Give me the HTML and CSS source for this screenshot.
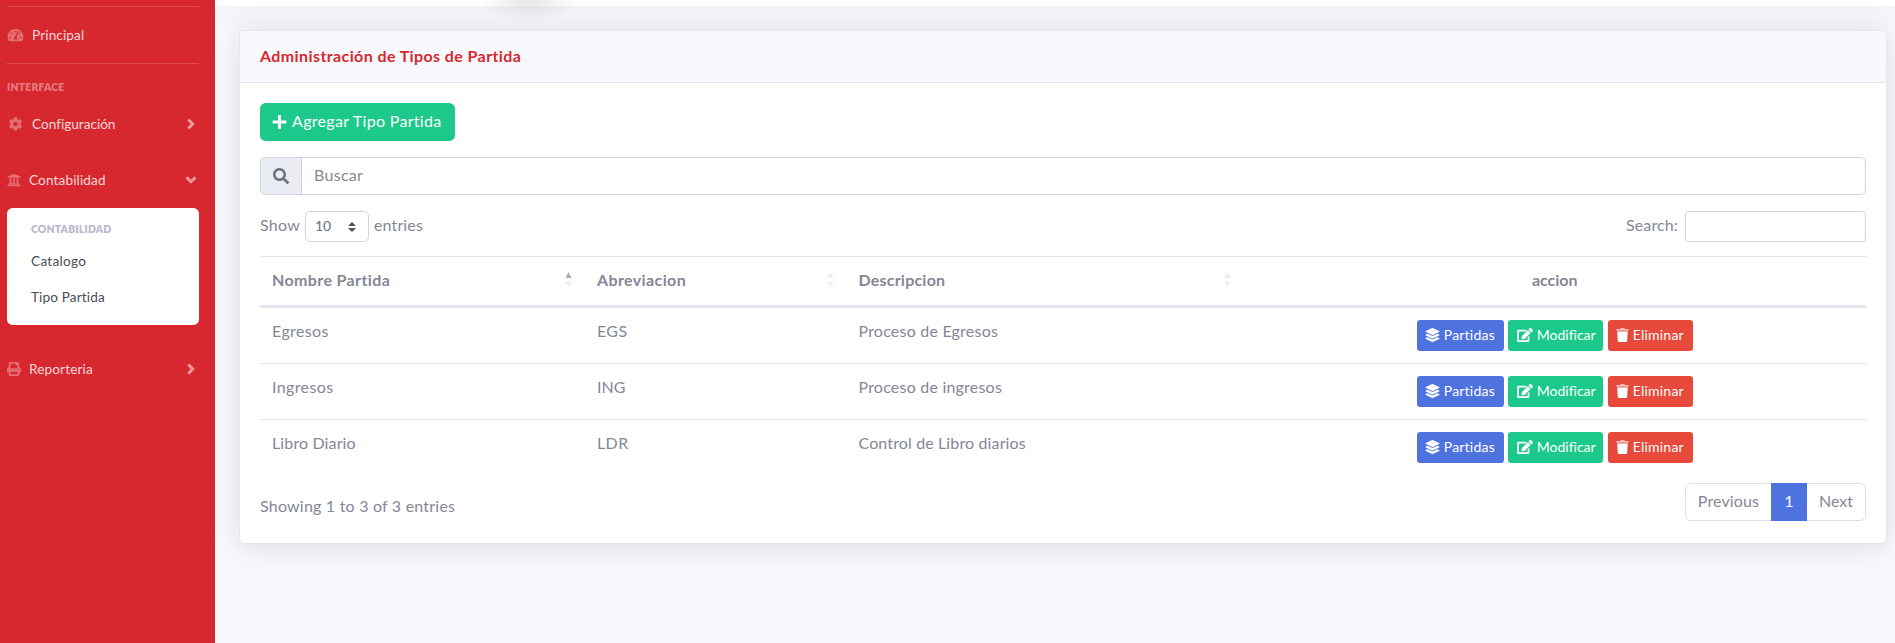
FILE: index.html
```html
<!DOCTYPE html>
<html lang="es">
<head>
<meta charset="utf-8">
<title>Tipos de Partida</title>
<link rel="stylesheet" href="styles.css">
</head>
<body>
<svg class="sprite" aria-hidden="true">
  <symbol id="gauge" viewBox="0 0 576 512"><path d="M288 32C128.94 32 0 160.94 0 320c0 52.8 14.25 102.26 39.06 144.8 5.61 9.62 16.3 15.2 27.44 15.2h443c11.14 0 21.83-5.58 27.44-15.2C561.75 422.26 576 372.8 576 320c0-159.06-128.94-288-288-288zm0 64c14.71 0 26.58 10.13 30.32 23.65-1.11 2.26-2.64 4.23-3.45 6.67l-9.22 27.67c-5.13 3.49-10.97 6.01-17.64 6.01-17.67 0-32-14.33-32-32S270.33 96 288 96zM96 384c-17.67 0-32-14.33-32-32s14.33-32 32-32 32 14.33 32 32-14.33 32-32 32zm48-160c-17.67 0-32-14.33-32-32s14.33-32 32-32 32 14.33 32 32-14.33 32-32 32zm246.77-72.41l-61.33 184C343.13 347.33 352 364.54 352 384c0 11.72-3.38 22.55-8.88 32H232.88c-5.5-9.45-8.88-20.28-8.88-32 0-33.94 26.5-61.43 59.9-63.59l61.34-184.01c4.17-12.56 17.73-19.45 30.36-15.17 12.57 4.19 19.35 17.79 15.17 30.36zm14.66 57.2l15.52-46.55c3.47-1.29 7.13-2.23 11.05-2.23 17.67 0 32 14.33 32 32s-14.33 32-32 32c-11.38-.01-20.89-6.28-26.57-15.22zM480 384c-17.67 0-32-14.33-32-32s14.33-32 32-32 32 14.33 32 32-14.33 32-32 32z"/></symbol>
  <symbol id="cog" viewBox="0 0 512 512"><path d="M487.4 315.7l-42.6-24.6c4.3-23.2 4.3-47 0-70.2l42.6-24.6c4.9-2.8 7.1-8.6 5.5-14-11.1-35.6-30-67.8-54.7-94.6-3.8-4.1-10-5.1-14.8-2.3L380.8 110c-17.9-15.4-38.5-27.3-60.8-35.1V25.8c0-5.6-3.9-10.5-9.4-11.7-36.7-8.2-74.3-7.8-109.2 0-5.5 1.2-9.4 6.1-9.4 11.7V75c-22.2 7.9-42.8 19.8-60.8 35.1L88.7 85.5c-4.9-2.8-11-1.9-14.8 2.3-24.7 26.7-43.6 58.9-54.7 94.6-1.7 5.4.6 11.2 5.5 14L67.3 221c-4.3 23.2-4.3 47 0 70.2l-42.6 24.6c-4.9 2.8-7.1 8.6-5.5 14 11.1 35.6 30 67.8 54.7 94.6 3.8 4.1 10 5.1 14.8 2.3l42.6-24.6c17.9 15.4 38.5 27.3 60.8 35.1v49.2c0 5.6 3.9 10.5 9.4 11.7 36.7 8.2 74.3 7.8 109.2 0 5.5-1.2 9.4-6.1 9.4-11.7v-49.2c22.2-7.9 42.8-19.8 60.8-35.1l42.6 24.6c4.9 2.8 11 1.9 14.8-2.3 24.7-26.7 43.6-58.9 54.7-94.6 1.5-5.5-.7-11.3-5.6-14.1zM256 336c-44.1 0-80-35.9-80-80s35.9-80 80-80 80 35.9 80 80-35.9 80-80 80z"/></symbol>
  <symbol id="bank" viewBox="0 0 512 512"><path d="M496 128v16a8 8 0 0 1-8 8h-24v12c0 6.627-5.373 12-12 12H60c-6.627 0-12-5.373-12-12v-12H24a8 8 0 0 1-8-8v-16a8 8 0 0 1 4.941-7.392l232-88a7.996 7.996 0 0 1 6.118 0l232 88A8 8 0 0 1 496 128zm-24 304H40c-13.255 0-24 10.745-24 24v16a8 8 0 0 0 8 8h464a8 8 0 0 0 8-8v-16c0-13.255-10.745-24-24-24zM96 192v192H60c-6.627 0-12 5.373-12 12v20h416v-20c0-6.627-5.373-12-12-12h-36V192h-64v192h-64V192h-64v192h-64V192H96z"/></symbol>
  <symbol id="print" viewBox="0 0 512 512"><path d="M448 192V77.25c0-8.49-3.37-16.62-9.37-22.63L393.37 9.37c-6-6-14.14-9.37-22.63-9.37H96C78.33 0 64 14.33 64 32v160c-35.35 0-64 28.65-64 64v112c0 8.84 7.16 16 16 16h48v96c0 17.67 14.33 32 32 32h320c17.67 0 32-14.33 32-32v-96h48c8.84 0 16-7.16 16-16V256c0-35.35-28.65-64-64-64zm-64 256H128v-96h256v96zm0-224H128V64h192v48c0 8.84 7.16 16 16 16h48v96zm48 72c-13.25 0-24-10.75-24-24 0-13.26 10.75-24 24-24s24 10.74 24 24c0 13.25-10.75 24-24 24z"/></symbol>
  <symbol id="angle-right" viewBox="0 0 256 512"><path d="M224.3 273l-136 136c-9.4 9.4-24.6 9.4-33.9 0l-22.6-22.6c-9.4-9.4-9.4-24.6 0-33.9l96.4-96.4-96.4-96.4c-9.4-9.4-9.4-24.6 0-33.9L54.3 103c9.4-9.4 24.6-9.4 33.9 0l136 136c9.5 9.4 9.5 24.6.1 34z"/></symbol>
  <symbol id="angle-down" viewBox="0 0 320 512"><path d="M143 352.3L7 216.3c-9.4-9.4-9.4-24.6 0-33.9l22.6-22.6c9.4-9.4 24.6-9.4 33.9 0l96.4 96.4 96.4-96.4c9.4-9.4 24.6-9.4 33.9 0l22.6 22.6c9.4 9.4 9.4 24.6 0 33.9l-136 136c-9.2 9.4-24.4 9.4-33.8 0z"/></symbol>
  <symbol id="plus" viewBox="0 0 448 512"><path d="M416 208H272V64c0-17.67-14.33-32-32-32h-32c-17.67 0-32 14.33-32 32v144H32c-17.67 0-32 14.33-32 32v32c0 17.67 14.33 32 32 32h144v144c0 17.67 14.33 32 32 32h32c17.67 0 32-14.33 32-32V304h144c17.67 0 32-14.33 32-32v-32c0-17.67-14.33-32-32-32z"/></symbol>
  <symbol id="search" viewBox="0 0 512 512"><path d="M505 442.7L405.3 343c-4.5-4.5-10.6-7-17-7H372c27.6-35.3 44-79.7 44-128C416 93.1 322.9 0 208 0S0 93.1 0 208s93.1 208 208 208c48.3 0 92.7-16.4 128-44v16.3c0 6.4 2.5 12.5 7 17l99.7 99.7c9.4 9.4 24.6 9.4 33.9 0l28.3-28.3c9.4-9.4 9.4-24.6.1-34zM208 336c-70.7 0-128-57.2-128-128 0-70.7 57.2-128 128-128 70.7 0 128 57.2 128 128 0 70.7-57.2 128-128 128z"/></symbol>
  <symbol id="layers" viewBox="0 0 512 512"><path d="M12.41 148.02l232.94 105.67c6.8 3.09 14.49 3.09 21.29 0l232.94-105.67c16.55-7.51 16.55-32.52 0-40.03L266.65 2.32a25.607 25.607 0 0 0-21.29 0L12.41 107.98c-16.55 7.51-16.55 32.53 0 40.04zm487.18 88.28l-58.09-26.33-161.64 73.27c-7.56 3.43-15.59 5.17-23.86 5.17s-16.29-1.74-23.86-5.17L70.51 209.97l-58.1 26.33c-16.55 7.5-16.55 32.5 0 40l232.94 105.59c6.8 3.08 14.49 3.08 21.29 0L499.59 276.3c16.55-7.5 16.55-32.5 0-40zm0 127.8l-57.87-26.23-161.86 73.37c-7.56 3.43-15.59 5.17-23.86 5.17s-16.29-1.74-23.86-5.17L70.29 337.87 12.41 364.1c-16.55 7.5-16.55 32.5 0 40l232.94 105.59c6.8 3.08 14.49 3.08 21.29 0L499.59 404.1c16.55-7.5 16.55-32.5 0-40z"/></symbol>
  <symbol id="edit" viewBox="0 0 576 512"><path d="M402.6 83.2l90.2 90.2c3.8 3.8 3.8 10 0 13.8L274.4 405.6l-92.8 10.3c-12.4 1.4-22.9-9.1-21.5-21.5l10.3-92.8L388.8 83.2c3.8-3.8 10-3.8 13.8 0zm162-22.9l-48.8-48.8c-15.2-15.2-39.9-15.2-55.2 0l-35.4 35.4c-3.8 3.8-3.8 10 0 13.8l90.2 90.2c3.8 3.8 10 3.8 13.8 0l35.4-35.4c15.2-15.3 15.2-40 0-55.2zM384 346.2V448H64V128h229.8c3.2 0 6.2-1.3 8.5-3.5l40-40c7.6-7.6 2.2-20.5-8.5-20.5H48C21.5 64 0 85.5 0 112v352c0 26.5 21.5 48 48 48h352c26.5 0 48-21.5 48-48V306.2c0-10.7-12.9-16-20.5-8.5l-40 40c-2.2 2.3-3.5 5.3-3.5 8.5z"/></symbol>
  <symbol id="trash" viewBox="0 0 448 512"><path d="M432 32H312l-9.4-18.7A24 24 0 0 0 281.1 0H166.8a23.72 23.72 0 0 0-21.4 13.3L136 32H16A16 16 0 0 0 0 48v32a16 16 0 0 0 16 16h416a16 16 0 0 0 16-16V48a16 16 0 0 0-16-16z" opacity=".65"/><path d="M53.2 467a48 48 0 0 0 47.9 45h245.8a48 48 0 0 0 47.9-45L416 128H32z"/></symbol>
</svg>
<div class="page">
  <nav class="sidebar">
    <hr class="divider">
    <a class="nav-link"><svg class="ico gauge"><use href="#gauge"/></svg><span class="ls-1">Principal</span></a>
    <hr class="divider">
    <div class="nav-heading"><span class="ls-2">INTERFACE</span></div>
    <a class="nav-link"><svg class="ico cog"><use href="#cog"/></svg><span>Configuración</span><svg class="caret right"><use href="#angle-right"/></svg></a>
    <a class="nav-link"><svg class="ico"><use href="#bank"/></svg><span class="ls-1">Contabilidad</span><svg class="caret down"><use href="#angle-down"/></svg></a>
    <div class="submenu">
      <h6 class="submenu-title"><span class="ls-2">CONTABILIDAD</span></h6>
      <a class="submenu-item"><span class="ls-3">Catalogo</span></a>
      <a class="submenu-item"><span class="ls-1">Tipo Partida</span></a>
    </div>
    <a class="nav-link"><svg class="ico"><use href="#print"/></svg><span class="ls-1">Reporteria</span><svg class="caret right"><use href="#angle-right"/></svg></a>
  </nav>
  <div class="content">
    <header class="topbar"></header>
    <main class="card">
      <div class="card-header"><h6 class="card-title">Administración de Tipos de Partida</h6></div>
      <div class="card-body">
        <button class="btn-add"><svg><use href="#plus"/></svg><span class="ls-3">Agregar Tipo Partida</span></button>
        <div class="search-group">
          <div class="search-icon"><svg><use href="#search"/></svg></div>
          <div class="search-field"><span class="ls-3">Buscar</span></div>
        </div>
        <div class="controls">
          <div class="length"><span class="show">Show</span>
            <div class="select"><span>10</span><svg viewBox="0 0 4 5"><path d="M2 0L0 2h4zm0 5L0 3h4z"/></svg></div>
            <span class="ls-1">entries</span></div>
          <div class="filter"><span class="ls-1">Search:</span><div class="filter-box"></div></div>
        </div>
        <table class="grid">
          <colgroup><col class="c1"><col class="c2"><col class="c3"><col class="c4"></colgroup>
          <thead><tr>
            <th><div class="th"><span class="ls-4">Nombre Partida</span><svg class="sort asc" viewBox="0 0 7 15"><path class="up" d="M3.5 0L6.7 6H.3z"/><path d="M3.5 15L6.7 9.5H.3z"/></svg></div></th>
            <th><div class="th"><span class="ls-4">Abreviacion</span><svg class="sort" viewBox="0 0 7 15"><path class="up" d="M3.5 0L6.7 6H.3z"/><path d="M3.5 15L6.7 9.5H.3z"/></svg></div></th>
            <th><div class="th"><span class="ls-2">Descripcion</span><svg class="sort" viewBox="0 0 7 15"><path class="up" d="M3.5 0L6.7 6H.3z"/><path d="M3.5 15L6.7 9.5H.3z"/></svg></div></th>
            <th><div class="th center"><span>accion</span></div></th>
          </tr></thead>
          <tbody>
            <tr><td><span class="ls-4">Egresos</span></td><td><span class="ls-4">EGS</span></td><td><span class="ls-2">Proceso de Egresos</span></td><td><div class="actions"><a class="btn blue"><svg><use href="#layers"/></svg><span class="ls-2">Partidas</span></a><a class="btn green"><svg><use href="#edit"/></svg><span>Modificar</span></a><a class="btn red"><svg><use href="#trash"/></svg><span class="ls-2">Eliminar</span></a></div></td></tr>
            <tr><td><span class="ls-4">Ingresos</span></td><td><span>ING</span></td><td><span class="ls-2">Proceso de ingresos</span></td><td><div class="actions"><a class="btn blue"><svg><use href="#layers"/></svg><span class="ls-2">Partidas</span></a><a class="btn green"><svg><use href="#edit"/></svg><span>Modificar</span></a><a class="btn red"><svg><use href="#trash"/></svg><span class="ls-2">Eliminar</span></a></div></td></tr>
            <tr><td><span class="ls-1">Libro Diario</span></td><td><span class="ls-4">LDR</span></td><td><span class="ls-1">Control de Libro diarios</span></td><td><div class="actions"><a class="btn blue"><svg><use href="#layers"/></svg><span class="ls-2">Partidas</span></a><a class="btn green"><svg><use href="#edit"/></svg><span>Modificar</span></a><a class="btn red"><svg><use href="#trash"/></svg><span class="ls-2">Eliminar</span></a></div></td></tr>
          </tbody>
        </table>
        <div class="footer">
          <div class="info"><span class="ls-2">Showing 1 to 3 of 3 entries</span></div>
          <div class="pager"><a class="prev"><span class="ls-1">Previous</span></a><a class="current"><span>1</span></a><a class="next"><span>Next</span></a></div>
        </div>
      </div>
    </main>
  </div>
</div>
</body>
</html>
```
FILE: styles.css
```css
* { box-sizing: border-box; }
body { margin: 0; font-family: "Lato", "Open Sans", sans-serif; font-size: 16px; line-height: 24px; font-variant-ligatures: none; color: #858796; background: #f8f9fc; overflow: hidden; }
svg { fill: currentColor; flex: none; }
.sprite { display: none; }
.page { display: flex; width: 1895px; height: 643px; }

.ls-1 { letter-spacing: .13px; }
.ls-2 { letter-spacing: .21px; }
.ls-3 { letter-spacing: .3px; }
.ls-4 { letter-spacing: .38px; }

.sidebar { flex: none; width: 215px; padding: 6px 16px 0 7px; background: #d8282f; }
.divider { height: 1px; margin: 0; border: 0; background: rgba(255, 255, 255, .17); }
.nav-link { display: flex; align-items: center; height: 56px; font-size: 13.6px; line-height: 20px; color: rgba(255, 255, 255, .82); }
.ico { width: 14px; height: 14px; margin-right: 8px; color: rgba(255, 255, 255, .32); }
.ico.gauge, .ico.cog { width: 17px; }
.caret { height: 16px; margin-left: auto; color: rgba(255, 255, 255, .52); stroke: currentColor; stroke-width: 14px; }
.caret.right { width: 8px; margin-right: 4px; }
.caret.down { width: 10px; margin-right: 3px; }
.nav-heading { height: 32px; padding-top: 15px; font-size: 10.4px; line-height: 16px; font-weight: 800; color: rgba(255, 255, 255, .4); }
.submenu { height: 117px; margin-bottom: 16px; padding: 13px 24px 0; border-radius: 5.6px; background: #fff; font-size: 13.6px; color: #4b4c56; }
.submenu-title { margin: 0 0 6px; font-size: 10.4px; line-height: 16px; font-weight: 800; color: #b7b9cc; }
.submenu-item { display: flex; align-items: center; height: 36px; line-height: 20px; }

.content { position: relative; flex: 1; min-width: 0; }
.topbar { height: 6px; background: #fff; box-shadow: 0 2.4px 28px 0 rgba(58, 59, 69, .15); }
/* soft shadow spilling over the top bar */
.topbar::after { content: ""; position: absolute; top: 0; left: 255px; width: 120px; height: 24px; background: radial-gradient(ellipse 52px 22px at 60px 0, rgba(60, 60, 60, .13), rgba(60, 60, 60, .06) 50%, transparent); }
.card { display: flex; flex-direction: column; height: 514px; margin: 24px 8px 0 24px; border: 1px solid #e3e6f0; border-radius: 5.6px; background: #fff; box-shadow: 0 2.4px 28px 0 rgba(58, 59, 69, .15); }
.card-header { display: flex; align-items: center; height: 52px; padding: 0 20px 2px; border-bottom: 1px solid #e3e6f0; border-radius: 5px 5px 0 0; background: #f8f9fc; }
.card-title { margin: 0; font-size: 16px; line-height: 19px; font-weight: 700; letter-spacing: .4px; color: #d8282f; }
.card-body { padding: 20px 20px 0; }
.btn-add { display: flex; align-items: center; gap: 5px; width: 195px; height: 38px; padding: 0 12px; border: 0; border-radius: 5.6px; background: #1cc88a; color: #fff; font: inherit; white-space: nowrap; }
.btn-add svg { width: 15px; height: 16px; }
.btn-add span, .btn span, .th span, .pager span, .select span { margin-bottom: 2px; }
.search-group { display: flex; height: 38px; margin-top: 16px; border: 1px solid #d1d3e2; border-radius: 5.6px; }
.search-icon { display: flex; align-items: center; justify-content: center; width: 41px; border-right: 1px solid #d1d3e2; border-radius: 5px 0 0 5px; background: #eaecf4; color: #6e707e; }
.search-icon svg { width: 16px; height: 16px; }
.search-field { padding: 5px 12px; }
.controls { display: flex; justify-content: space-between; height: 31px; margin-top: 16px; }
.length, .filter { display: flex; }
.length { line-height: 27px; }
.filter { line-height: 28px; }
.show { width: 41px; letter-spacing: .3px; }
.select { display: flex; align-items: center; justify-content: space-between; width: 64px; height: 31px; margin: 0 5px 0 4px; padding: 0 12px 0 9px; border: 1px solid #d1d3e2; border-radius: 5px; font-size: 14px; color: #6e707e; }
.select svg { width: 8px; height: 10px; color: #4e505e; }
.filter-box { width: 181px; height: 31px; margin-left: 7px; border: 1px solid #d1d3e2; border-radius: 3.2px; }

.grid { width: 100%; margin-top: 14px; border-collapse: separate; border-spacing: 0; table-layout: fixed; }
.c1 { width: 325px; }
.c2 { width: 261.5px; }
.c3 { width: 397px; }
th { height: 52px; padding: 0 12px; border-top: 1px solid #e3e6f0; border-bottom: 3px solid #e3e6f0; text-align: left; }
td { height: 56px; padding: 11px 12px 0; border-bottom: 1px solid #e3e6f0; vertical-align: top; }
tr:last-child td { border-bottom: 0; }
.th { display: flex; justify-content: space-between; align-items: center; }
.th.center { justify-content: center; }
.sort { width: 7px; height: 15px; margin: 0 1px 3px 0; color: #ececef; }
.sort.asc .up { fill: #aeafb9; }
.actions { display: flex; justify-content: center; padding-top: 1px; }
.btn { display: flex; align-items: center; gap: 4px; height: 31px; padding: 0 8px; border-radius: 3.2px; color: #fff; font-size: 14px; line-height: 21px; }
.btn svg { height: 14px; margin-bottom: 1px; }
.blue { width: 87px; margin-right: 4px; background: #4e73df; }
.green { width: 95px; margin-right: 5px; padding-left: 9px; background: #1cc88a; }
.red { width: 85px; background: #e74a3b; }
.blue svg { width: 15px; }
.green svg { width: 16px; }
.red svg { width: 13px; }
.footer { display: flex; justify-content: space-between; margin-top: 7px; }
.info { padding-top: 11px; }
.pager { display: flex; width: 181px; height: 38px; border: 1px solid #dddfeb; border-radius: 5.6px; }
.pager a { display: flex; align-items: center; justify-content: center; }
.prev { width: 85px; }
.pager .current { width: 36px; height: 38px; margin-top: -1px; background: #4e73df; color: #fff; }
.next { width: 58px; }
```
